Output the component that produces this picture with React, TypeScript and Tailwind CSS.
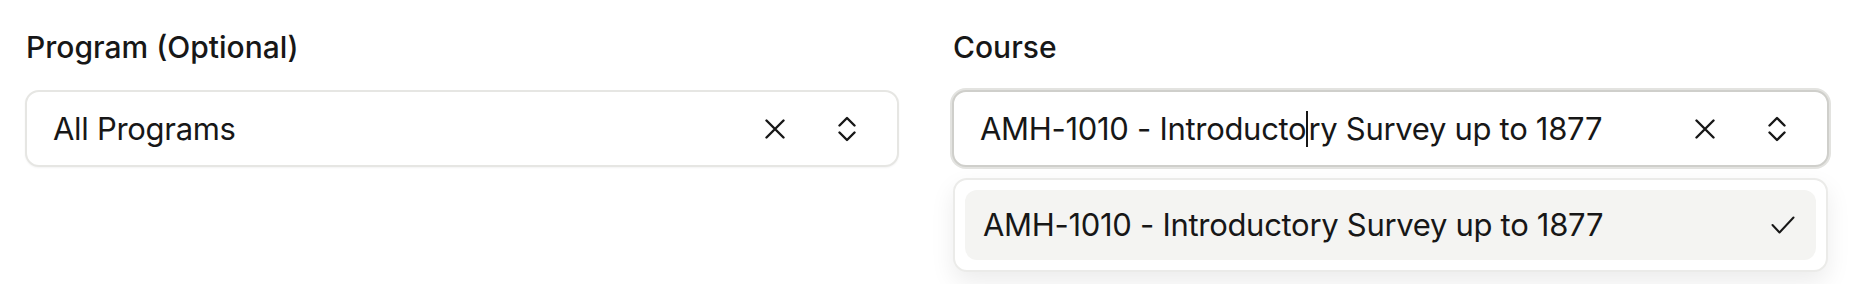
import { useState } from "react";

function XIcon() {
  return (
    <svg width="20" height="20" viewBox="0 0 20 20" fill="none" stroke="#171717" strokeWidth="2.4" strokeLinecap="round">
      <path d="M1.5 1.5l17 17M18.5 1.5l-17 17" />
    </svg>
  );
}

function SortIcon() {
  return (
    <svg width="18" height="26" viewBox="0 0 18 26" fill="none" stroke="#171717" strokeWidth="2.4" strokeLinecap="round" strokeLinejoin="round">
      <path d="M1.5 9.5L9 2l7.5 7.5M1.5 16.5L9 24l7.5-7.5" />
    </svg>
  );
}

function CheckIcon() {
  return (
    <svg width="24" height="18" viewBox="0 0 24 18" fill="none" stroke="#171717" strokeWidth="2" strokeLinecap="round" strokeLinejoin="round">
      <path d="M1.5 9l7 7.5L22.5 1.5" />
    </svg>
  );
}

function Field({ label, focused, children, menu }: { label: string; focused?: boolean; children: React.ReactNode; menu?: React.ReactNode }) {
  return (
    <div className="flex flex-col">
      <div className="h-[40px] pl-px text-[30px] leading-[40px] font-medium text-[#171717]">{label}</div>
      <div className="relative mt-[23px]">
        <div
          className={
            focused
              ? "flex h-[77px] items-center rounded-[14px] border-2 border-[#cfcfcb] bg-white pl-[26px] pr-[41px] ring-[2px] ring-[#e3e3e0] shadow-[0_1px_2px_rgba(0,0,0,0.05)]"
              : "flex h-[77px] items-center rounded-[14px] border-2 border-[#e6e6e3] bg-white pl-[26px] pr-[41px] shadow-[0_1px_2px_rgba(0,0,0,0.05)]"
          }
        >
          <div className="flex-1 text-[31px] leading-[48px] tracking-[-0.3px] text-[#171717]">{children}</div>
          <button className="flex h-[20px] w-[20px] items-center justify-center">
            <XIcon />
          </button>
          <button className="ml-[53px] flex h-[26px] w-[18px] items-center justify-center">
            <SortIcon />
          </button>
        </div>
        {menu}
      </div>
    </div>
  );
}

export default function App() {
  const [course] = useState("AMH-1010 - Introductory Survey up to 1877");
  return (
    <div className="h-[284px] bg-white px-[25px] pt-[27px]" style={{ fontFamily: "Inter, sans-serif" }}>
      <div className="grid grid-cols-[874px_877px] gap-[53px]">
        <Field label="Program (Optional)">All Programs</Field>
        <Field
          label="Course"
          focused
          menu={
            <div className="absolute inset-x-[1px] top-[88px] rounded-[14px] border-2 border-[#ebebe9] bg-white p-[10px] shadow-[0_10px_24px_rgba(0,0,0,0.08)]">
              <div className="flex h-[70px] items-center rounded-[12px] bg-[#f4f4f2] pl-[18px] pr-[21px]">
                <div className="flex-1 text-[31px] leading-[48px] tracking-[-0.3px] text-[#171717]">{course}</div>
                <CheckIcon />
              </div>
            </div>
          }
        >
          <span>AMH-1010 - Introducto</span>
          <span className="inline-block h-[36px] w-[2px] translate-y-[7px] bg-[#171717] align-baseline" />
          <span>ry Survey up to 1877</span>
        </Field>
      </div>
    </div>
  );
}
